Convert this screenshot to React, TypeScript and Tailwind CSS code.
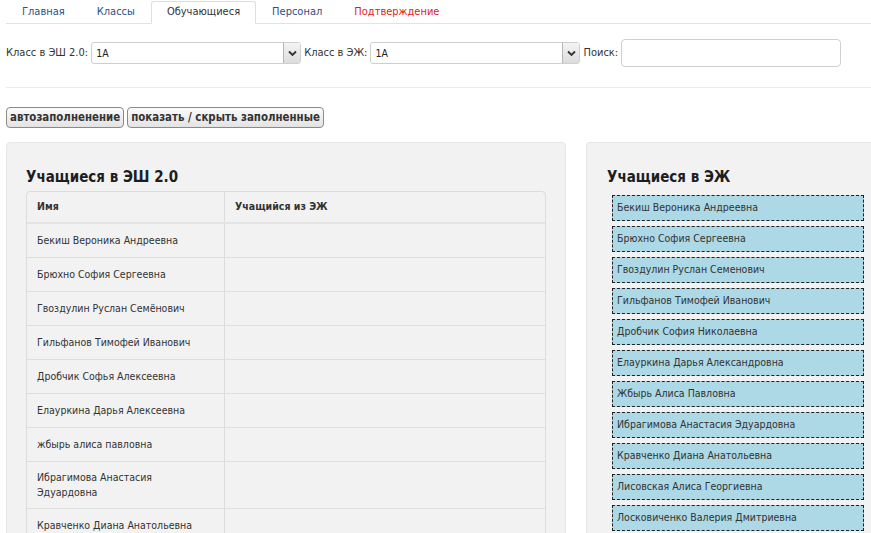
import React from "react";

const tabs = ["Главная", "Классы", "Обучающиеся", "Персонал", "Подтверждение"];

const leftRows = [
  "Бекиш Вероника Андреевна",
  "Брюхно София Сергеевна",
  "Гвоздулин Руслан Семёнович",
  "Гильфанов Тимофей Иванович",
  "Дробчик Софья Алексеевна",
  "Елауркина Дарья Алексеевна",
  "жбырь алиса павловна",
  "Ибрагимова Анастасия Эдуардовна",
  "Кравченко Диана Анатольевна",
  "Лисовская Алиса Георгиевна",
];

const rightItems = [
  "Бекиш Вероника Андреевна",
  "Брюхно София Сергеевна",
  "Гвоздулин Руслан Семенович",
  "Гильфанов Тимофей Иванович",
  "Дробчик София Николаевна",
  "Елауркина Дарья Александровна",
  "Жбырь Алиса Павловна",
  "Ибрагимова Анастасия Эдуардовна",
  "Кравченко Диана Анатольевна",
  "Лисовская Алиса Георгиевна",
  "Лосковиченко Валерия Дмитриевна",
];

function Select() {
  return (
    <div className="flex h-[22px] w-[210px] items-stretch rounded-[3px] border border-[#cfcfcf] bg-white">
      <div className="flex-1 pl-[4px] text-[10.5px] leading-[20px] text-[#222]">1А</div>
      <div className="flex w-[17px] items-center justify-center border-l border-[#b5b5b5] bg-gradient-to-b from-[#f4f4f4] to-[#dcdcdc]">
        <svg width="9" height="7" viewBox="0 0 9 7">
          <path d="M1 1.5 L4.5 5 L8 1.5" fill="none" stroke="#333" strokeWidth="1.8" />
        </svg>
      </div>
    </div>
  );
}

export default function App() {
  return (
    <div className="h-[533px] w-[871px] overflow-hidden bg-white text-[10.5px] text-[#333]" style={{ fontFamily: '"DejaVu Sans Condensed", "DejaVu Sans", Verdana, sans-serif' }}>
      {/* tabs */}
      <div className="ml-[6px] flex h-[24px] items-end border-b border-[#e2e2e2] text-[11px]">
        {tabs.map((t, i) => (
          <div
            key={t}
            className={
              i === 2
                ? "mb-[-1px] flex h-[23px] items-center rounded-t-[3px] border border-b-white border-[#dedede] bg-white px-[15px] text-[#333]"
                : i === 4
                ? "flex h-[22px] items-center px-[16px] text-[#e31a1a]"
                : "flex h-[22px] items-center px-[16px] text-[#2d4f86]"
            }
          >
            {t}
          </div>
        ))}
      </div>

      {/* filter row */}
      <div className="ml-[6px] mt-[15px] flex items-center text-[11px]">
        <span>Класс в ЭШ 2.0:</span>
        <div className="ml-[3px]"><Select /></div>
        <span className="ml-[3px]">Класс в ЭЖ:</span>
        <div className="ml-[3px]"><Select /></div>
        <span className="ml-[3px]">Поиск:</span>
        <div className="ml-[3px] h-[28px] w-[220px] rounded-[4px] border border-[#cfcfcf] bg-white" />
      </div>

      <div className="ml-[6px] mt-[20px] border-t border-[#ebebeb]" />

      {/* buttons */}
      <div className="ml-[6px] mt-[19px] flex gap-[3px]">
        <button className="h-[21px] rounded-[4px] border border-[#8a8a8a] bg-gradient-to-b from-[#fbfbfb] to-[#e3e3e3] px-[3px] text-[11.4px] font-bold text-[#333]">
          автозаполненение
        </button>
        <button className="h-[21px] rounded-[4px] border border-[#8a8a8a] bg-gradient-to-b from-[#fbfbfb] to-[#e3e3e3] px-[3px] text-[11.4px] font-bold text-[#333]">
          показать / скрыть заполненные
        </button>
      </div>

      {/* panels */}
      <div className="ml-[6px] mt-[14px] flex gap-[20px]">
        <div className="w-[560px] shrink-0 rounded-[4px] border border-[#e6e6e6] bg-[#f2f2f2] px-[19px] pt-[24px]">
          <h2 className="mb-[4px] text-[15px] leading-[20px] font-bold text-[#1e1e1e]">Учащиеся в ЭШ 2.0</h2>
          <div className="overflow-hidden rounded-[4px] border border-[#dcdcdc]">
            <div className="flex h-[32px] items-center border-b-2 border-[#e4e4e4] font-bold text-[#333]">
              <div className="flex h-full w-[198px] items-center border-r border-[#dcdcdc] pl-[10px]">Имя</div>
              <div className="pl-[10px]">Учащийся из ЭЖ</div>
            </div>
            {leftRows.map((r) => (
              <div key={r} className="flex border-b border-[#dedede]">
                <div className="flex min-h-[33px] w-[198px] items-center border-r border-[#dcdcdc] py-[8px] pl-[10px] pr-[22px] leading-[15px]">
                  {r}
                </div>
                <div className="flex-1" />
              </div>
            ))}
          </div>
        </div>

        <div className="flex-1 rounded-l-[4px] border border-r-0 border-[#e6e6e6] bg-[#f2f2f2] pl-[20px] pt-[24px]">
          <h2 className="mb-[8px] text-[15px] leading-[20px] font-bold text-[#1e1e1e]">Учащиеся в ЭЖ</h2>
          <div className="flex flex-col gap-[5px] pl-[5px]">
            {rightItems.map((r) => (
              <div key={r} className="flex h-[26px] w-[252px] shrink-0 items-center border border-dashed border-[#222] bg-[#add8e6] pl-[4px] text-[#333]">
                {r}
              </div>
            ))}
          </div>
        </div>
      </div>
    </div>
  );
}
